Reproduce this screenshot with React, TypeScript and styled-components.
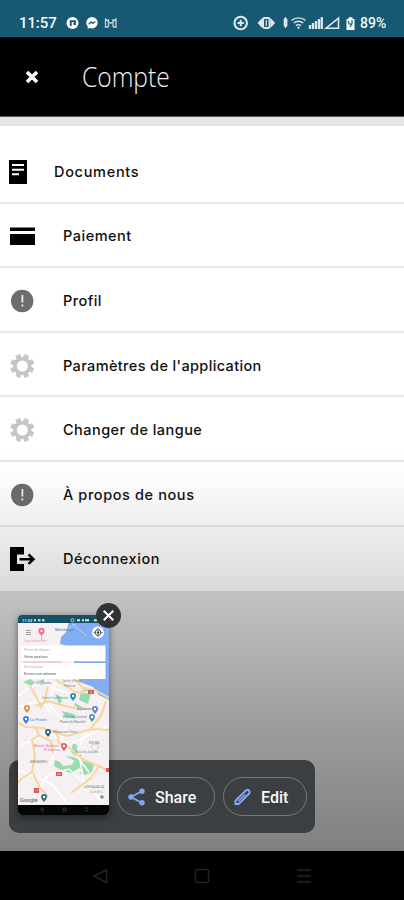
import React from "react";
import styled, { createGlobalStyle } from "styled-components";

const GlobalStyle = createGlobalStyle`
  * { box-sizing: border-box; }
  html, body { margin: 0; padding: 0; background: #000; }
  svg { display: block; flex: none; }
`;

const Screen = styled.div`
  position: relative;
  width: 404px;
  height: 900px;
  display: flex;
  flex-direction: column;
  overflow: hidden;
  background: #000;
  font-family: Roboto, "Liberation Sans", sans-serif;
`;

const StatusBar = styled.div`
  height: 37px;
  flex: none;
  background: #175972;
  display: flex;
  align-items: center;
  justify-content: space-between;
  padding: 9px 15px 0 19px;
  color: #f4f8fa;
`;

const StatusGroup = styled.div`
  display: flex;
  align-items: center;
`;

const Clock = styled.span`
  font-size: 15px;
  font-weight: 500;
  letter-spacing: -0.1px;
  width: 47px;
`;

const Battery = styled.span`
  font-size: 14px;
  font-weight: 500;
  width: 29px;
  letter-spacing: 0;
`;

const Header = styled.header`
  height: 80px;
  flex: none;
  background: #000;
  border-bottom: 1px solid #5c5c5c;
  display: flex;
  align-items: center;
  padding-left: 25px;
  gap: 42px;
`;

const Title = styled.h1`
  margin: 0 0 0 1px;
  font: 350 27px/36px "Open Sans", "Noto Sans", sans-serif;
  color: #f2f2f2;
  transform: scaleX(0.91);
  transform-origin: left;
`;

const Content = styled.main`
  height: 734px;
  flex: none;
  background: #e4e4e4;
  padding-top: 9px;
`;

const List = styled.ul`
  list-style: none;
  margin: 0;
  padding: 13px 0 0;
  background: #fff;
`;

const Row = styled.li`
  height: 64.6px;
  display: flex;
  align-items: center;
  gap: 27px;
  padding: 3px 0 0 8px;
  border-bottom: 2px solid #e7e7e7;
  &:first-child { gap: 26px; }
  &:last-child { border-bottom: 0; height: 64px; padding-top: 1px; }
`;

const Label = styled.span<{ $spacing: number }>`
  font: 500 14.5px/20px Inter, "Liberation Sans", sans-serif;
  letter-spacing: ${(p) => p.$spacing}px;
  color: #101010;
  white-space: nowrap;
`;

const Shade = styled.div`
  position: absolute;
  left: 0;
  right: 0;
  top: 450px;
  height: 401px;
  background: linear-gradient(rgba(0,0,0,0) 0%, rgba(0,0,0,0.015) 8%, rgba(0,0,0,0.14) 34%, rgba(0,0,0,0.3) 66%, rgba(0,0,0,0.44) 100%);
`;

const SharePanel = styled.div`
  position: absolute;
  left: 9px;
  top: 760px;
  width: 306px;
  height: 73px;
  border-radius: 10px;
  background: #3b3f41;
  display: flex;
  align-items: center;
  gap: 8px;
  padding-left: 108px;
`;

const Pill = styled.button<{ $width: number; $gap: number }>`
  width: ${(p) => p.$width}px;
  height: 39px;
  border: 1px solid #75797c;
  border-radius: 20px;
  background: transparent;
  color: #f7f8f9;
  display: flex;
  align-items: center;
  gap: ${(p) => p.$gap}px;
  padding: 2px 0 0 10px;
  font: 500 16px/20px Roboto, sans-serif;
  svg { margin-top: -2px; }
`;

const Thumbnail = styled.div`
  position: absolute;
  left: 18px;
  top: 615px;
  width: 91px;
  height: 200px;
  border-radius: 4px;
  overflow: hidden;
  box-shadow: 0 2px 7px rgba(0, 0, 0, 0.5);
`;

const CloseBadge = styled.button`
  position: absolute;
  left: 96px;
  top: 603px;
  width: 25px;
  height: 25px;
  padding: 0;
  border: 0;
  border-radius: 50%;
  background: #303234;
  display: grid;
  place-items: center;
`;

const NavBar = styled.nav`
  height: 49px;
  flex: none;
  background: #000;
  display: flex;
  align-items: center;
  justify-content: space-between;
  padding: 0 92px;
`;

const DocumentIcon = () => (
  <svg width="20" height="26" viewBox="0 0 20 26">
    <path d="M1 1h18v24H1z" />
    <path d="M4 6h12M4 10.8h12M4 15.3h7" stroke="#fff" strokeWidth="2" />
  </svg>
);

const CardIcon = () => (
  <svg width="28" height="20" viewBox="0 0 28 20">
    <path d="M2 1.5h25v3.6H2zM2 8h25v11H2z" />
  </svg>
);

const AlertIcon = () => (
  <svg width="28" height="24" viewBox="0 0 28 24">
    <circle cx="14.2" cy="12" r="11.2" fill="#6d6d6d" />
    <path d="M14.4 6v7.5M14.4 15.5v2" stroke="#eee" strokeWidth="1.8" />
  </svg>
);

const GearIcon = () => (
  <svg width="28" height="28" viewBox="0 0 28 28" fill="none" stroke="#c3c5c9">
    <circle cx="14.3" cy="14" r="7.3" strokeWidth="3.6" />
    {[22.5, 67.5, 112.5, 157.5, 202.5, 247.5, 292.5, 337.5].map((a) => (
      <path key={a} d="M12.2 5.5V2.5h4.2v3z" fill="#c3c5c9" strokeWidth=".8" strokeLinejoin="round" transform={`rotate(${a} 14.3 14)`} />
    ))}
  </svg>
);

const LogoutIcon = () => (
  <svg width="28" height="26" viewBox="0 0 28 26">
    <path d="M2 1h14v7.4H9v9.7h7V25H2z" />
    <path d="M11.5 13.2H25M20.5 8.5l5 4.7-5 4.7" fill="none" stroke="#000" strokeWidth="2.5" />
  </svg>
);

const rows = [
  { label: "Documents", Icon: DocumentIcon, spacing: 0.7 },
  { label: "Paiement", Icon: CardIcon, spacing: 0.5 },
  { label: "Profil", Icon: AlertIcon, spacing: 0.45 },
  { label: "Paramètres de l'application", Icon: GearIcon, spacing: 0.36 },
  { label: "Changer de langue", Icon: GearIcon, spacing: 0.46 },
  { label: "À propos de nous", Icon: AlertIcon, spacing: 0.6 },
  { label: "Déconnexion", Icon: LogoutIcon, spacing: 0.55 },
];

const NotificationIcons = () => (
  <svg width="54" height="14" viewBox="0 0 54 14" fill="none">
    <circle cx="6.5" cy="7" r="6" fill="#fff" />
    <path d="M4.7 10V5.2H9V8H7.4" stroke="#175972" strokeWidth="1.9" />
    <circle cx="26" cy="6.8" r="5.7" fill="#fff" />
    <path d="m21.5 12.7.5-3 3 2z" fill="#fff" />
    <path d="m22.7 8.3 2.5-2.5 1.6 1.6 2.5-2" stroke="#175972" strokeWidth="1.3" />
    <path d="M39.5 2.3v9.4M50 2.3v9.4M39.5 3l5.2 4.5L50 3M42.5 3v8M47 3v8M40 11h2.5M47 11h3" stroke="#c6d6de" strokeWidth="1.3" />
  </svg>
);

const SystemIcons = () => (
  <svg width="128" height="16" viewBox="0 0 128 16" fill="none" stroke="#dce8ed">
    <circle cx="8.7" cy="8" r="6.2" strokeWidth="2.1" />
    <path d="M8.7 4.8v6.4M5.5 8h6.4" strokeWidth="2" />
    <path d="m30 3.6-4 4.4 4 4.4M38.6 3.6l4 4.4-4 4.4" fill="#dce8ed" strokeWidth="1" />
    <rect x="31" y="3" width="6.6" height="10" rx="1.4" strokeWidth="2" />
    <path d="M34.3 5v6" strokeWidth="1.2" />
    <path d="m53.4 1.8 2 2.7v6l-2 2.7-1.7-2.7v-6z" fill="#dce8ed" stroke="none" />
    <path d="M59.5 5.4q7-5 14 0M61.7 8q4.8-3.6 9.6 0M63.9 10.6q2.6-2 5.2 0" strokeWidth="1.4" />
    <circle cx="66.5" cy="12.7" r="1.1" fill="#fff" stroke="none" />
    <path d="M78 10v4M81 8v6M84 6v8M87 4v10M89.8 2v12" strokeWidth="2.3" />
    <path d="M94 13.2h12.5V3.2z" strokeWidth="1.6" />
    <path d="M114.5 4h2V2.3h4V4h2v11h-8z" fill="#fff" stroke="none" />
    <path d="m116.5 6 .5 3h3V5M119.8 9l-1.8 3" stroke="#175972" strokeWidth="1.2" />
  </svg>
);

const mapLabels: [number, number, string, string, number][] = [
  [24, 642, "Zone Industrielle", "#e89daa", 3],
  [55, 631, "Bibliothèque", "#4770c5", 3.4],
  [36, 684, "Mustapha", "#8a8b91", 3.4],
  [62, 682, "Jardin d'Essai", "#8a8b91", 3.2],
  [64, 687, "Hamma", "#8a8b91", 3.2],
  [42, 699, "Centre Commercial", "#629aa0", 3],
  [77, 710, "Aquarium", "#5b82c8", 3.4],
  [63, 718, "Hôpital Central", "#4e8b91", 3.6],
  [60, 723, "Place du Marché", "#71777d", 3.4],
  [30, 721, "La Poste", "#5083db", 4.3],
  [53, 733, "Restaurant Vieux", "#74808a", 3.2],
  [34, 747, "Musée National", "#e07989", 3.6],
  [44, 751, "El Hamma", "#e07989", 3.4],
  [76, 753, "Bois des Arcades", "#8b9290", 2.9],
  [30, 763, "BIRMANDREIS", "#787b80", 2.7],
  [89, 744, "KOUBA", "#787b80", 3.2],
  [84, 788, "AIN NAADJA", "#787b80", 3.5],
  [90, 793, "Gué de C.", "#999ca0", 3.2],
];

const pins: [number, number, string][] = [
  [73, 696, "#2390a6"], [95, 709, "#6b80cf"], [92, 717, "#5a91a8"], [26, 719, "#4378dd"],
  [48, 732, "#27677c"], [64, 746, "#e85b62"], [27, 708, "#ef8a37"], [44, 797, "#2d6f83"],
];

const MapPreview = () => (
  <svg width="91" height="200" viewBox="18 615 91 200">
    <path d="M18 615h91v200H18z" fill="#f5f1f2" />
    <path d="M77 622h32v78l-10-5-6-8-13-5-6-12V648l-14-4 1-7 5-5 3-10z" fill="#83adf3" />
    <path d="m72 624 15 12M67 629l9-5" stroke="#b2cef8" strokeWidth="1" fill="none" />
    <g fill="#9adbb0">
      <path d="m23 682 7-3 6 4-5 3zM38 681l6-2v7l-4-2zM81 691l5-2 5 4-3 11-9-4zM75 703l9 5-4 2-6-5zM55 694l5 2 2 6-3 2zM62 711l12 3 2 5-11-3z" />
      <path d="M73 743l4 2v6l5 5-5 1-6-5zM55 760l5 2 3 4 8-1 4-4-10-5 8 1 10 4 11 3-2 8-7 3-6-2 5-3-5-2-8 5-10-3-7-4z" />
    </g>
    <g fill="none" stroke="#fffefe" strokeWidth="1.5">
      <path d="m18 696 20-14 29 11 25-1M20 745l31-11 18 11 39-19M30 802l18-27 21-6 34 33M18 770l34 14 15 19M55 682l-6 22 18 22-8 18-10 22M87 730l-9 20 8 42M18 707l24-7 9 13M76 755l13 17" />
    </g>
    <g fill="none" stroke="#f9d59b" strokeWidth="2">
      <path d="M56 680l11 6 8 6 10 1M76 680l7 8 12 2 14 8M36 706l12-5 17 5 13 3 12 0M48 686l-3 14-4 7-4-9-7-12M18 723l8 4 17 1 14 5 10 3 14-4 11-3 17 1M106 701l-5 15-7 8-4 6" />
      <path d="m36 728 3 7-7 5 3 15-3 17-10 6-4 5M56 729l3 14 10 4 13 12 17 7 10 5M99 766l-8 12-20 15M33 773l7 15 8 8M38 735l13 6 2 12" />
    </g>
    {pins.map(([x, y, color]) => (
      <g key={`${x}-${y}`}>
        <path d={`M${x - 3} ${y}a3 3 0 1 1 6 0q0 2-3 5-3-3-3-5z`} fill={color} />
        <circle cx={x} cy={y} r="1.2" fill="#fff" />
      </g>
    ))}
    <path d="M56 772h6v4h-6zM34 788h5v5h-5zM88 690h6v4h-6zM106 768h3v4h-3z" fill="#dc5660" />
    <path d="M58 773v2M60 773v2M36 790h2M91 691v2" stroke="#fff" strokeWidth=".6" />
    {mapLabels.map(([x, y, text, color, size]) => (
      <text key={text} x={x} y={y} fill={color} fontSize={size}>{text}</text>
    ))}
    <path d="M91 746q4-4 8 0-1 4-4 5-3-1-4-5z" fill="none" stroke="#c3c3c5" strokeWidth=".7" />
    <path d="M20.5 645.5h85v15.8h-85zM20.5 663h85v16h-85z" fill="#fff" />
    <path d="M23 662h39" stroke="#ed9c9c" strokeWidth=".8" />
    <g fontSize="3.8">
      <text x="24" y="651" fill="#b3b3b3">Point de départ</text>
      <text x="24" y="658" fill="#555">Votre position</text>
      <text x="24" y="668" fill="#b3b3b3">Destination</text>
      <text x="24" y="675" fill="#555">Entrez une adresse</text>
    </g>
    <path d="M26 630.5h5M26 632.5h5M26 634.5h5" stroke="#8c8c91" strokeWidth=".8" />
    <path d="M38.5 631a3 3 0 1 1 6 0q0 2-3 4.5-3-2.5-3-4.5zM41.5 635v5" fill="#e87992" stroke="#e87992" strokeWidth=".6" />
    <circle cx="41.5" cy="631" r="1.1" fill="#fff" />
    <circle cx="98" cy="632.5" r="6" fill="#fff" />
    <circle cx="98" cy="632.5" r="2.8" fill="none" stroke="#444" />
    <circle cx="98" cy="632.5" r="1.2" fill="#333" />
    <path d="M98 628v2M98 635v2M93.5 632.5h2M100.5 632.5h2" stroke="#444" strokeWidth=".8" />
    <path d="M18 615h91v8H18z" fill="#145268" />
    <text x="22" y="621.8" fontSize="4" fontWeight="700" fill="#dce8ed">11:52</text>
    <path d="M34 620.3h2M38 620.3h2.5M42 620.3h2.5M77 620.3h3M82 620.3h2M85 620.3h4M94 620.3h3" stroke="#dce8ed" strokeWidth="2" />
    <circle cx="72.5" cy="620.3" r="1.6" fill="none" stroke="#dce8ed" strokeWidth=".8" />
    <text x="20" y="802" fontSize="5.5" fontWeight="500" fill="#6c7074">Google</text>
    <circle cx="102" cy="797" r="1.7" fill="#858585" />
    <path d="M18 805h91v10H18z" fill="#050606" />
    <path d="m60 807.5-2.5 2 2.5 2zM80 808h3v3h-3zM102 808h3M102 811h3" transform="translate(-17 0)" fill="none" stroke="#404244" strokeWidth=".8" />
  </svg>
);

export default function App() {
  return (
    <Screen>
      <GlobalStyle />
      <StatusBar>
        <StatusGroup><Clock>11:57</Clock><NotificationIcons /></StatusGroup>
        <StatusGroup><SystemIcons /><Battery>89%</Battery></StatusGroup>
      </StatusBar>
      <Header>
        <svg width="14" height="14" viewBox="0 0 14 14"><path d="m2 2 10 10M12 2 2 12" stroke="#fff" strokeWidth="3.6" /></svg>
        <Title>Compte</Title>
      </Header>
      <Content>
        <List>
          {rows.map(({ label, Icon, spacing }) => (
            <Row key={label}><Icon /><Label $spacing={spacing}>{label}</Label></Row>
          ))}
        </List>
      </Content>
      <NavBar>
        <svg width="16" height="16" viewBox="0 0 16 16"><path d="M14.5 2v12.5L2 8.2z" fill="none" stroke="#242424" strokeWidth="1.4" strokeLinejoin="round" /></svg>
        <svg width="16" height="16" viewBox="0 0 16 16"><rect x="1.5" y="1.5" width="13" height="13" rx="1.5" fill="none" stroke="#242424" strokeWidth="1.4" /></svg>
        <svg width="16" height="16" viewBox="0 0 16 16"><path d="M1 2h14M1 8h14M1 14h14" stroke="#242424" strokeWidth="1.5" /></svg>
      </NavBar>
      <Shade />
      <SharePanel>
        <Pill $width={98} $gap={10}>
          <svg width="17" height="18" viewBox="0 0 17 18" fill="#80a9f3"><path d="M14 3 3 9l11 6" fill="none" stroke="#80a9f3" strokeWidth="1.8" /><circle cx="14" cy="3.2" r="2.7" /><circle cx="3" cy="9" r="2.7" /><circle cx="14" cy="14.8" r="2.7" /></svg>
          Share
        </Pill>
        <Pill $width={84} $gap={10}>
          <svg width="17" height="18" viewBox="0 0 17 18" fill="none" stroke="#80a9f3" strokeWidth="2"><path d="m1.5 12.7 10.7-10.5q1.5-1 2.8.5 1.3 1.3.1 2.8L4.7 16H1.5z" /><path d="m4.3 13.3 7-6.8" strokeWidth="1.2" /></svg>
          Edit
        </Pill>
      </SharePanel>
      <Thumbnail><MapPreview /></Thumbnail>
      <CloseBadge aria-label="Close">
        <svg width="13" height="13" viewBox="0 0 13 13"><path d="m1.7 1.7 9.6 9.6M11.3 1.7l-9.6 9.6" stroke="#fff" strokeWidth="2" /></svg>
      </CloseBadge>
    </Screen>
  );
}
